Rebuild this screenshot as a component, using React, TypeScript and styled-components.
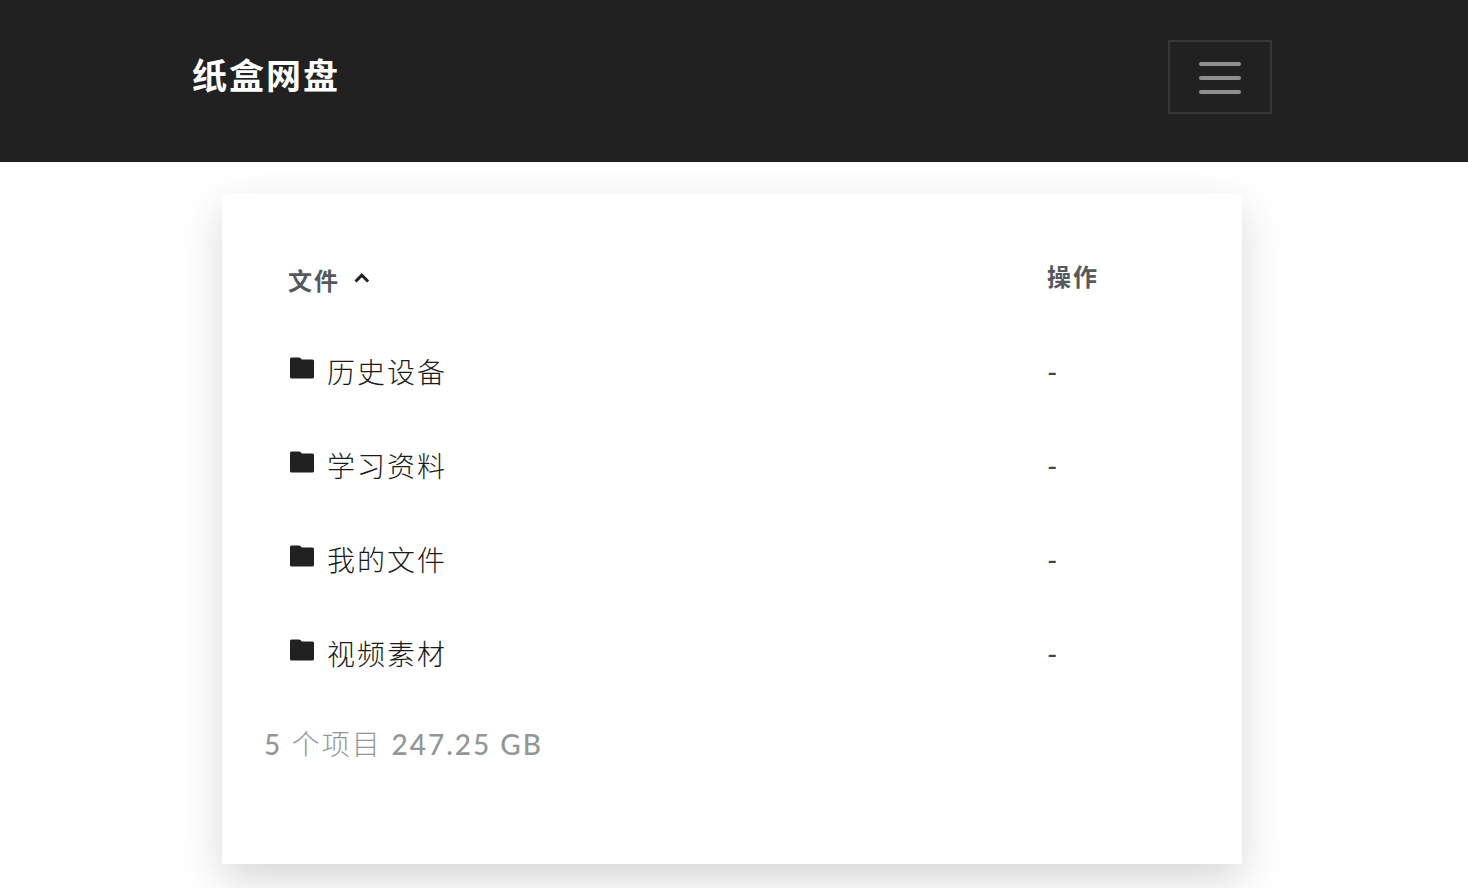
import React from "react";
import styled, { createGlobalStyle } from "styled-components";

const GlobalStyle = createGlobalStyle`
  *, *::before, *::after { box-sizing: border-box; }
  body {
    margin: 0;
    background: #fff;
    color: #55595c;
    font-family: Lato, "Noto Sans CJK SC", sans-serif;
    font-size: 28px;
    line-height: 42px;
    letter-spacing: 2px;
  }
`;

const Header = styled.header`
  background: #212121;
  padding: 40px 4px 47px 0;
  border-bottom: 1px solid #1a1a1a;
`;

const Container = styled.div`
  max-width: 1080px;
  margin: 0 auto;
`;

const Bar = styled(Container)`
  display: flex;
  align-items: center;
  justify-content: space-between;
`;

const Brand = styled.a`
  padding-bottom: 4px;
  color: #fff;
  font-size: 35px;
  font-weight: 700;
  line-height: 52px;
  text-decoration: none;
`;

const Toggler = styled.button`
  display: flex;
  align-items: center;
  justify-content: center;
  width: 104px;
  height: 74px;
  padding: 2px 0 0;
  background: transparent;
  border: 2px solid #373737;
  cursor: pointer;
`;

const Main = styled.main`
  padding: 32px 4px 24px 0;
`;

const Card = styled.section`
  max-width: 1020px;
  margin: 0 auto;
  padding: 42px 42px 99px;
  background: #fff;
  box-shadow: 0 16px 40px rgba(0, 0, 0, 0.16);
`;

const Table = styled.table`
  width: 100%;
  table-layout: fixed;
  border-collapse: collapse;
`;

const HeadCell = styled.th`
  padding: 23px 24px 26px;
  font-size: 24px;
  font-weight: 700;
  line-height: 36px;
  text-align: left;
  vertical-align: top;

  &:last-child {
    width: 177px;
  }
`;

const SortButton = styled.button`
  display: flex;
  align-items: center;
  gap: 12px;
  padding: 4px 0 0;
  border: 0;
  background: none;
  color: inherit;
  font: inherit;
  letter-spacing: inherit;
  cursor: pointer;
`;

const Cell = styled.td`
  padding: 26px 24px;
  color: #444;
`;

const FolderLink = styled.a`
  display: flex;
  align-items: center;
  gap: 12px;
  color: #1a1a1a;
  font-weight: 300;
  text-decoration: none;
`;

const FolderGlyph = styled.svg`
  width: 27px;
  height: 22px;
  margin-bottom: 8px;
`;

const Summary = styled.p`
  margin: 0;
  padding-top: 22px;
  color: #919699;
  font-weight: 300;
`;

const Figure = styled.span`
  font-weight: 500;
`;

const folders = ["历史设备", "学习资料", "我的文件", "视频素材"];

function FolderIcon() {
  return (
    <FolderGlyph viewBox="0 0 27 22" aria-hidden="true">
      <path
        d="M3.500.5H11q.8 0 1.400.6l1.400 1.400H24.500q1.500 0 1.500 1.500v16q0 1.500-1.500 1.500h-21Q2 21.500 2 20V2Q2 .5 3.500.5Z"
        fill="#212121"
      />
    </FolderGlyph>
  );
}

export default function App() {
  return (
    <>
      <GlobalStyle />
      <Header>
        <Bar as="nav">
          <Brand href="#">纸盒网盘</Brand>
          <Toggler type="button" aria-label="菜单">
            <svg width="60" height="60" viewBox="0 0 60 60" aria-hidden="true">
              <path
                d="M11 16h38M11 30h38M11 44h38"
                stroke="#8f8f8f"
                strokeWidth="4"
                strokeLinecap="round"
              />
            </svg>
          </Toggler>
        </Bar>
      </Header>
      <Main>
        <Card>
          <Table>
            <thead>
              <tr>
                <HeadCell scope="col" aria-sort="ascending">
                  <SortButton type="button">
                    文件
                    <svg width="18" height="20" viewBox="0 0 18 20" aria-hidden="true">
                      <path
                        d="m3.500 10.500 6.300-6.300 6.300 6.300"
                        fill="none"
                        stroke="#212121"
                        strokeWidth="3"
                      />
                    </svg>
                  </SortButton>
                </HeadCell>
                <HeadCell scope="col">操作</HeadCell>
              </tr>
            </thead>
            <tbody>
              {folders.map((name) => (
                <tr key={name}>
                  <Cell>
                    <FolderLink href="#">
                      <FolderIcon />
                      {name}
                    </FolderLink>
                  </Cell>
                  <Cell>-</Cell>
                </tr>
              ))}
            </tbody>
          </Table>
          <Summary>
            <Figure>5</Figure> 个项目 <Figure>247.25 GB</Figure>
          </Summary>
        </Card>
      </Main>
    </>
  );
}
